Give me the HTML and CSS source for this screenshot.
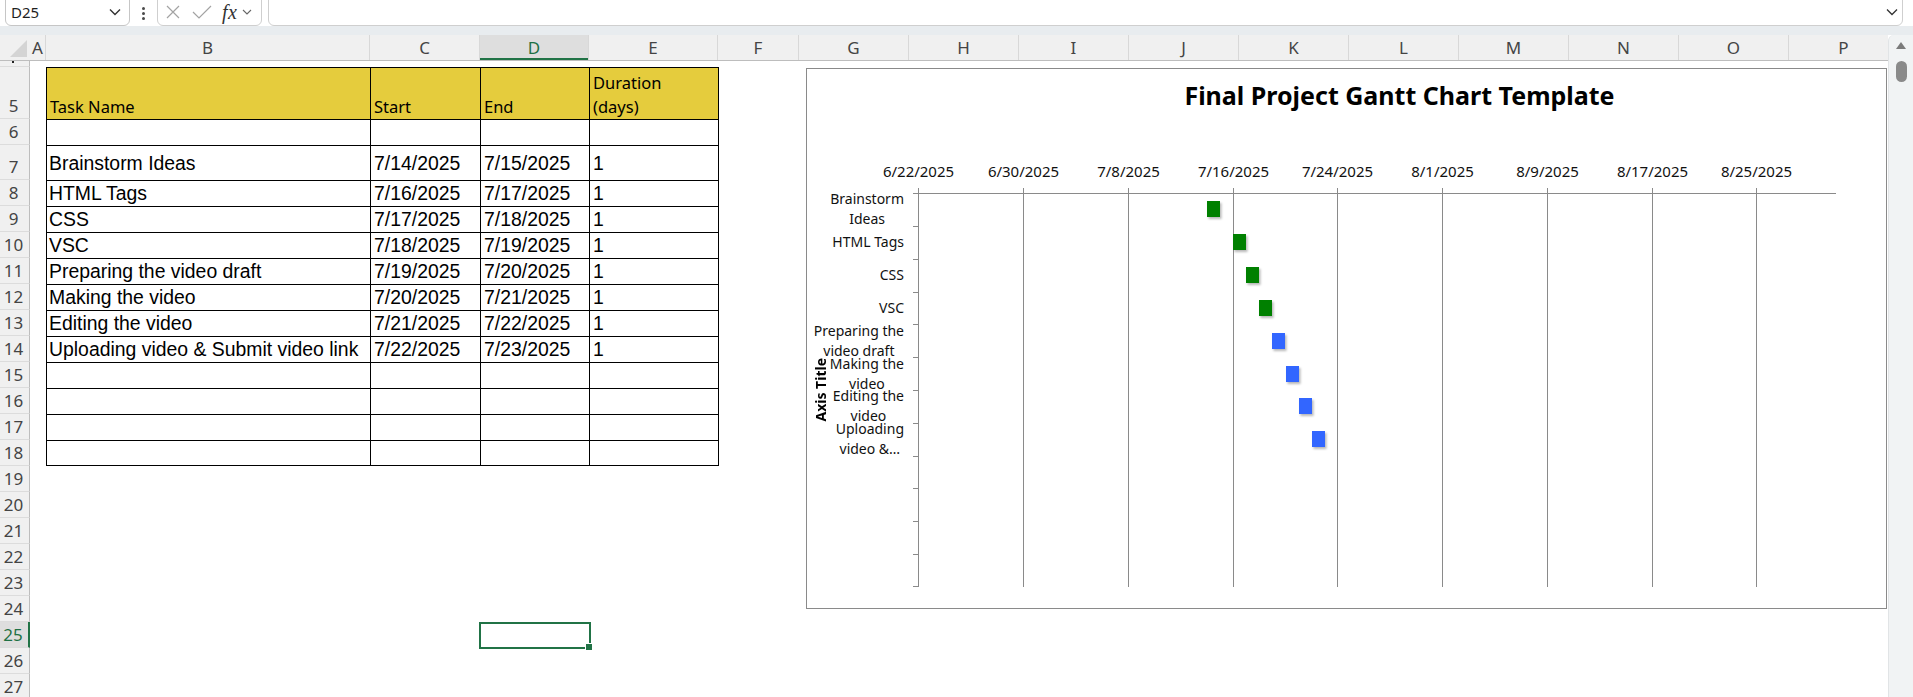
FILE: index.html
```html
<!DOCTYPE html>
<html>
<head>
<meta charset="utf-8">
<link rel="stylesheet" href="styles.css">
</head>
<body>
<div class="toolbar">
  <div class="namebox"><span>D25</span><svg class="chev" viewBox="0 0 12 8"><path d="M1 1.5L6 6.5L11 1.5" stroke="#333" stroke-width="1.4" fill="none"/></svg></div>
  <div class="kebab"><i></i><i></i><i></i></div>
  <div class="fxbox">
    <svg class="x" viewBox="0 0 14 14"><path d="M1 1L13 13M13 1L1 13" stroke="#a3a3a3" stroke-width="1.2" fill="none"/></svg>
    <svg class="ok" viewBox="0 0 20 14"><path d="M1 7L7 13L19 1" stroke="#a3a3a3" stroke-width="1.2" fill="none"/></svg>
    <span class="fx">fx</span>
    <svg class="chev-s" viewBox="0 0 10 6"><path d="M1 1L5 5L9 1" stroke="#666" stroke-width="1.1" fill="none"/></svg>
  </div>
  <div class="formula"><svg class="chev" viewBox="0 0 12 8"><path d="M1 1.5L6 6.5L11 1.5" stroke="#333" stroke-width="1.3" fill="none"/></svg></div>
</div>
<div class="band"></div>
<div class="sheet">
  <div class="grid">
    <div class="colheads">
      <div class="corner"><i class="tri"></i></div>
      <div class="ch w-a">A</div>
      <div class="ch w-b">B</div>
      <div class="ch w-c">C</div>
      <div class="ch w-d sel">D</div>
      <div class="ch w-e">E</div>
      <div class="ch w-f">F</div>
      <div class="ch w-g">G</div>
      <div class="ch w-g">H</div>
      <div class="ch w-g">I</div>
      <div class="ch w-g">J</div>
      <div class="ch w-g">K</div>
      <div class="ch w-g">L</div>
      <div class="ch w-g">M</div>
      <div class="ch w-g">N</div>
      <div class="ch w-g">O</div>
      <div class="ch w-g">P</div>
    </div>

    <div class="row h4"><div class="rh"><i class="dot"></i></div></div>
    <div class="row h5"><div class="rh">5</div><div class="sp"></div>
      <div class="c hd b"><span>Task Name</span></div><div class="c hd cc"><span>Start</span></div><div class="c hd d"><span>End</span></div><div class="c hd e"><span>Duration<br>(days)</span></div></div>
    <div class="row"><div class="rh">6</div><div class="sp"></div>
      <div class="c b"></div><div class="c cc"></div><div class="c d"></div><div class="c e"></div></div>
    <div class="row h7"><div class="rh">7</div><div class="sp"></div>
      <div class="c b">Brainstorm Ideas</div><div class="c cc">7/14/2025</div><div class="c d">7/15/2025</div><div class="c e">1</div></div>
    <div class="row"><div class="rh">8</div><div class="sp"></div>
      <div class="c b">HTML Tags</div><div class="c cc">7/16/2025</div><div class="c d">7/17/2025</div><div class="c e">1</div></div>
    <div class="row"><div class="rh">9</div><div class="sp"></div>
      <div class="c b">CSS</div><div class="c cc">7/17/2025</div><div class="c d">7/18/2025</div><div class="c e">1</div></div>
    <div class="row"><div class="rh">10</div><div class="sp"></div>
      <div class="c b">VSC</div><div class="c cc">7/18/2025</div><div class="c d">7/19/2025</div><div class="c e">1</div></div>
    <div class="row"><div class="rh">11</div><div class="sp"></div>
      <div class="c b">Preparing the video draft</div><div class="c cc">7/19/2025</div><div class="c d">7/20/2025</div><div class="c e">1</div></div>
    <div class="row"><div class="rh">12</div><div class="sp"></div>
      <div class="c b">Making the video</div><div class="c cc">7/20/2025</div><div class="c d">7/21/2025</div><div class="c e">1</div></div>
    <div class="row"><div class="rh">13</div><div class="sp"></div>
      <div class="c b">Editing the video</div><div class="c cc">7/21/2025</div><div class="c d">7/22/2025</div><div class="c e">1</div></div>
    <div class="row"><div class="rh">14</div><div class="sp"></div>
      <div class="c b">Uploading video &amp; Submit video link</div><div class="c cc">7/22/2025</div><div class="c d">7/23/2025</div><div class="c e">1</div></div>
    <div class="row"><div class="rh">15</div><div class="sp"></div>
      <div class="c b"></div><div class="c cc"></div><div class="c d"></div><div class="c e"></div></div>
    <div class="row"><div class="rh">16</div><div class="sp"></div>
      <div class="c b"></div><div class="c cc"></div><div class="c d"></div><div class="c e"></div></div>
    <div class="row"><div class="rh">17</div><div class="sp"></div>
      <div class="c b"></div><div class="c cc"></div><div class="c d"></div><div class="c e"></div></div>
    <div class="row last"><div class="rh">18</div><div class="sp"></div>
      <div class="c b"></div><div class="c cc"></div><div class="c d"></div><div class="c e"></div></div>
    <div class="row"><div class="rh">19</div></div>
    <div class="row"><div class="rh">20</div></div>
    <div class="row"><div class="rh">21</div></div>
    <div class="row"><div class="rh">22</div></div>
    <div class="row"><div class="rh">23</div></div>
    <div class="row"><div class="rh">24</div></div>
    <div class="row"><div class="rh sel">25</div><div class="sp"></div><div class="blank w-b"></div><div class="blank w-c"></div><div class="selcell"></div></div>
    <div class="row"><div class="rh">26</div></div>
    <div class="row"><div class="rh">27</div></div>

    <div class="chart">
      <div class="chart-title">Final Project Gantt Chart Template</div>
      <div class="chart-main">
        <div class="axis-title"><span>Axis Title</span></div>
        <div class="cat-labels">
          <div class="cat"><span>Brainstorm<br>Ideas</span></div>
          <div class="cat"><span>HTML Tags</span></div>
          <div class="cat"><span>CSS</span></div>
          <div class="cat"><span>VSC</span></div>
          <div class="cat"><span>Preparing the<br>video draft</span></div>
          <div class="cat"><span>Making the<br>video</span></div>
          <div class="cat"><span>Editing the<br>video</span></div>
          <div class="cat"><span>Uploading<br>video &amp;…</span></div>
          <div class="cat"></div>
          <div class="cat"></div>
          <div class="cat"></div>
          <div class="cat"></div>
        </div>
        <svg class="plot" width="940" height="440" viewBox="0 0 940 440">
          <defs>
            <filter id="sh" x="-50%" y="-50%" width="200%" height="200%">
              <feDropShadow dx="1.5" dy="2" stdDeviation="1.3" flood-color="#000" flood-opacity="0.28"/>
            </filter>
          </defs>
          <g stroke="#8a8a8a" stroke-width="1">
            <line x1="12.5" y1="32" x2="12.5" y2="431"/>
            <line x1="117.5" y1="32" x2="117.5" y2="431"/>
            <line x1="222.5" y1="32" x2="222.5" y2="431"/>
            <line x1="327.5" y1="32" x2="327.5" y2="431"/>
            <line x1="431.5" y1="32" x2="431.5" y2="431"/>
            <line x1="536.5" y1="32" x2="536.5" y2="431"/>
            <line x1="641.5" y1="32" x2="641.5" y2="431"/>
            <line x1="746.5" y1="32" x2="746.5" y2="431"/>
            <line x1="850.5" y1="32" x2="850.5" y2="431"/>
            <line x1="7" y1="37.5" x2="930" y2="37.5"/>
            <line x1="7" y1="70.5" x2="12" y2="70.5"/>
            <line x1="7" y1="103.5" x2="12" y2="103.5"/>
            <line x1="7" y1="136.5" x2="12" y2="136.5"/>
            <line x1="7" y1="168.5" x2="12" y2="168.5"/>
            <line x1="7" y1="201.5" x2="12" y2="201.5"/>
            <line x1="7" y1="234.5" x2="12" y2="234.5"/>
            <line x1="7" y1="267.5" x2="12" y2="267.5"/>
            <line x1="7" y1="300.5" x2="12" y2="300.5"/>
            <line x1="7" y1="332.5" x2="12" y2="332.5"/>
            <line x1="7" y1="365.5" x2="12" y2="365.5"/>
            <line x1="7" y1="398.5" x2="12" y2="398.5"/>
            <line x1="7" y1="430.5" x2="12" y2="430.5"/>
          </g>
          <g font-family="Noto Sans, sans-serif" font-size="15" text-anchor="middle" fill="#111">
            <text x="12.5" y="21">6/22/2025</text>
            <text x="117.5" y="21">6/30/2025</text>
            <text x="222.5" y="21">7/8/2025</text>
            <text x="327.5" y="21">7/16/2025</text>
            <text x="431.5" y="21">7/24/2025</text>
            <text x="536.5" y="21">8/1/2025</text>
            <text x="641.5" y="21">8/9/2025</text>
            <text x="746.5" y="21">8/17/2025</text>
            <text x="850.5" y="21">8/25/2025</text>
          </g>
          <g filter="url(#sh)">
            <rect x="301" y="45" width="13" height="16" fill="#008000"/>
            <rect x="327" y="78" width="13" height="16" fill="#008000"/>
            <rect x="340" y="111" width="13" height="16" fill="#008000"/>
            <rect x="353" y="144" width="13" height="16" fill="#008000"/>
            <rect x="366" y="177" width="13" height="16" fill="#3366ff"/>
            <rect x="380" y="210" width="13" height="16" fill="#3366ff"/>
            <rect x="393" y="242" width="13" height="16" fill="#3366ff"/>
            <rect x="406" y="275" width="13" height="16" fill="#3366ff"/>
          </g>
        </svg>
      </div>
    </div>
  </div>
  <div class="vscroll"><i class="up"></i><i class="thumb"></i></div>
</div>
</body>
</html>
```

FILE: styles.css
```css
* { box-sizing: border-box; }
html, body { margin: 0; padding: 0; }
body {
  width: 1913px;
  height: 697px;
  overflow: hidden;
  background: #fff;
  color: #000;
  font-family: "Noto Sans", "Liberation Sans", sans-serif;
}

/* formula bar */
.toolbar { display: flex; align-items: flex-end; height: 26px; background: #fff; }
.namebox {
  flex: none;
  margin-left: 5px;
  width: 125px;
  height: 34px;
  border: 1px solid #c6c6c6;
  border-radius: 6px;
  display: flex;
  align-items: center;
  justify-content: space-between;
  padding: 6px 8px 0 5px;
  font-size: 15px;
  color: #1f1f1f;
  background: #fff;
}
.chev { width: 12px; height: 8px; display: block; }
.kebab {
  flex: none;
  width: 27px;
  height: 26px;
  display: flex;
  flex-direction: column;
  align-items: center;
  justify-content: center;
  gap: 2px;
}
.kebab i { display: block; width: 3px; height: 3px; border-radius: 50%; background: #4a4a4a; }
.fxbox {
  flex: none;
  width: 105px;
  height: 34px;
  border: 1px solid #cfcfcf;
  border-radius: 6px;
  display: flex;
  align-items: center;
  padding: 6px 0 0 8px;
  background: #fff;
}
.fxbox .x { width: 14px; height: 14px; margin-right: 12px; display: block; }
.fxbox .ok { width: 20px; height: 14px; margin-right: 10px; display: block; }
.fx {
  font-family: "Liberation Serif", serif;
  font-style: italic;
  font-size: 20px;
  color: #333;
  margin-right: 5px;
  letter-spacing: 0.5px;
}
.fxbox .chev-s { width: 10px; height: 6px; display: block; }
.formula {
  flex: 1;
  margin: 0 10px 0 6px;
  height: 34px;
  border: 1px solid #cfcfcf;
  border-radius: 6px;
  display: flex;
  align-items: center;
  justify-content: flex-end;
  padding: 6px 4px 0 0;
  background: #fff;
}
.band { height: 9px; background: #e8ecef; }

/* sheet */
.sheet { display: flex; height: 662px; }
.grid { position: relative; width: 1888px; flex: none; overflow: hidden; }
.vscroll {
  flex: none;
  width: 25px;
  background: #f1f3f4;
  border-left: 1px solid #e1e4e6;
  border-top-left-radius: 6px;
  display: flex;
  flex-direction: column;
  align-items: center;
  padding-top: 7px;
}
.up {
  display: block;
  width: 0;
  height: 0;
  border-left: 5px solid transparent;
  border-right: 5px solid transparent;
  border-bottom: 7px solid #7b7b7b;
}
.thumb { display: block; margin-top: 12px; width: 11px; height: 21px; border-radius: 6px; background: #8a8a8a; }

.colheads {
  display: flex;
  height: 26px;
  border-bottom: 1px solid #bdbdbd;
  background: #f0f0f0;
  overflow: hidden;
}
.corner {
  flex: none;
  width: 30px;
  display: flex;
  align-items: flex-end;
  justify-content: flex-end;
  padding: 0 3px 3px 0;
}
.tri { display: block; width: 0; height: 0; border-left: 17px solid transparent; border-bottom: 17px solid #d4d4d4; }
.ch {
  flex: none;
  border-right: 1px solid #d8d8d8;
  display: flex;
  align-items: center;
  justify-content: center;
  font-size: 17px;
  color: #444;
}
.ch.sel { background: #dedede; color: #1e7145; box-shadow: inset 0 -2px 0 #217346; }
.w-a { width: 16px; }
.w-b { width: 324px; }
.w-c { width: 110px; }
.w-d { width: 109px; }
.w-e { width: 129px; }
.w-f { width: 81px; }
.w-g { width: 110px; }

.row { display: flex; height: 26px; }
.row.h4 { height: 6px; }
.row.h5 { height: 52px; }
.row.h7 { height: 35px; }
.rh {
  flex: none;
  width: 30px;
  background: #f0f0f0;
  border-right: 1px solid #bdbdbd;
  border-bottom: 1px solid #dcdcdc;
  display: flex;
  align-items: flex-end;
  justify-content: center;
  padding: 0 2px 2px 0;
  font-size: 17px;
  line-height: 20px;
  color: #444;
}
.rh.sel { background: #dedede; color: #1e7145; border-right: 2px solid #217346; }
.h4 .rh { align-items: flex-start; justify-content: flex-start; padding: 0 0 0 12px; }
.dot { display: block; width: 2px; height: 2px; background: #222; }

.sp { flex: none; width: 16px; }
.blank { flex: none; }
.c {
  flex: none;
  border-left: 1px solid #000;
  border-top: 1px solid #000;
  display: flex;
  align-items: center;
  padding-left: 3px;
  font-family: "Liberation Sans", Arial, sans-serif;
  font-size: 19.4px;
  white-space: nowrap;
  overflow: hidden;
}
.c.b { width: 324px; padding-left: 2px; }
.c.cc { width: 110px; }
.c.d { width: 109px; }
.c.e { width: 130px; border-right: 1px solid #000; }
.row.last .c { border-bottom: 1px solid #000; }
.c.hd {
  background: #e5cc3d;
  align-items: flex-end;
  padding-left: 3px;
  font-family: "Noto Sans", sans-serif;
  font-size: 16.5px;
  line-height: 24px;
}

.selcell { flex: none; width: 109px; position: relative; }
.selcell::after {
  content: "";
  position: absolute;
  left: -1px;
  top: 0;
  right: -2px;
  bottom: -1px;
  border: 2px solid #217346;
}
.selcell::before {
  content: "";
  position: absolute;
  right: -4px;
  bottom: -3px;
  width: 6px;
  height: 6px;
  background: #217346;
  border: 1px solid #fff;
  z-index: 1;
}

/* chart */
.chart {
  position: absolute;
  left: 806px;
  top: 33px;
  width: 1081px;
  height: 541px;
  border: 1px solid #8a8a8a;
  background: #fff;
}
.chart-title {
  height: 87px;
  padding: 9px 0 0 106px;
  text-align: center;
  font-weight: 700;
  font-size: 25px;
  line-height: 34px;
  white-space: nowrap;
}
.chart-main { display: flex; }
.axis-title {
  flex: none;
  width: 26px;
  height: 431px;
  padding-top: 37px;
  display: flex;
  align-items: center;
  justify-content: center;
}
.axis-title span {
  writing-mode: vertical-rl;
  transform: rotate(180deg);
  font-weight: 700;
  font-size: 14px;
  white-space: nowrap;
}
.cat-labels { flex: none; width: 71px; padding-top: 37px; margin-right: 2px; }
.cat { height: 32.83px; display: flex; justify-content: flex-end; align-items: center; }
.cat span {
  flex: none;
  text-align: center;
  white-space: nowrap;
  font-size: 14px;
  line-height: 20px;
  color: #111;
}
.plot { flex: none; display: block; overflow: visible; }
```
